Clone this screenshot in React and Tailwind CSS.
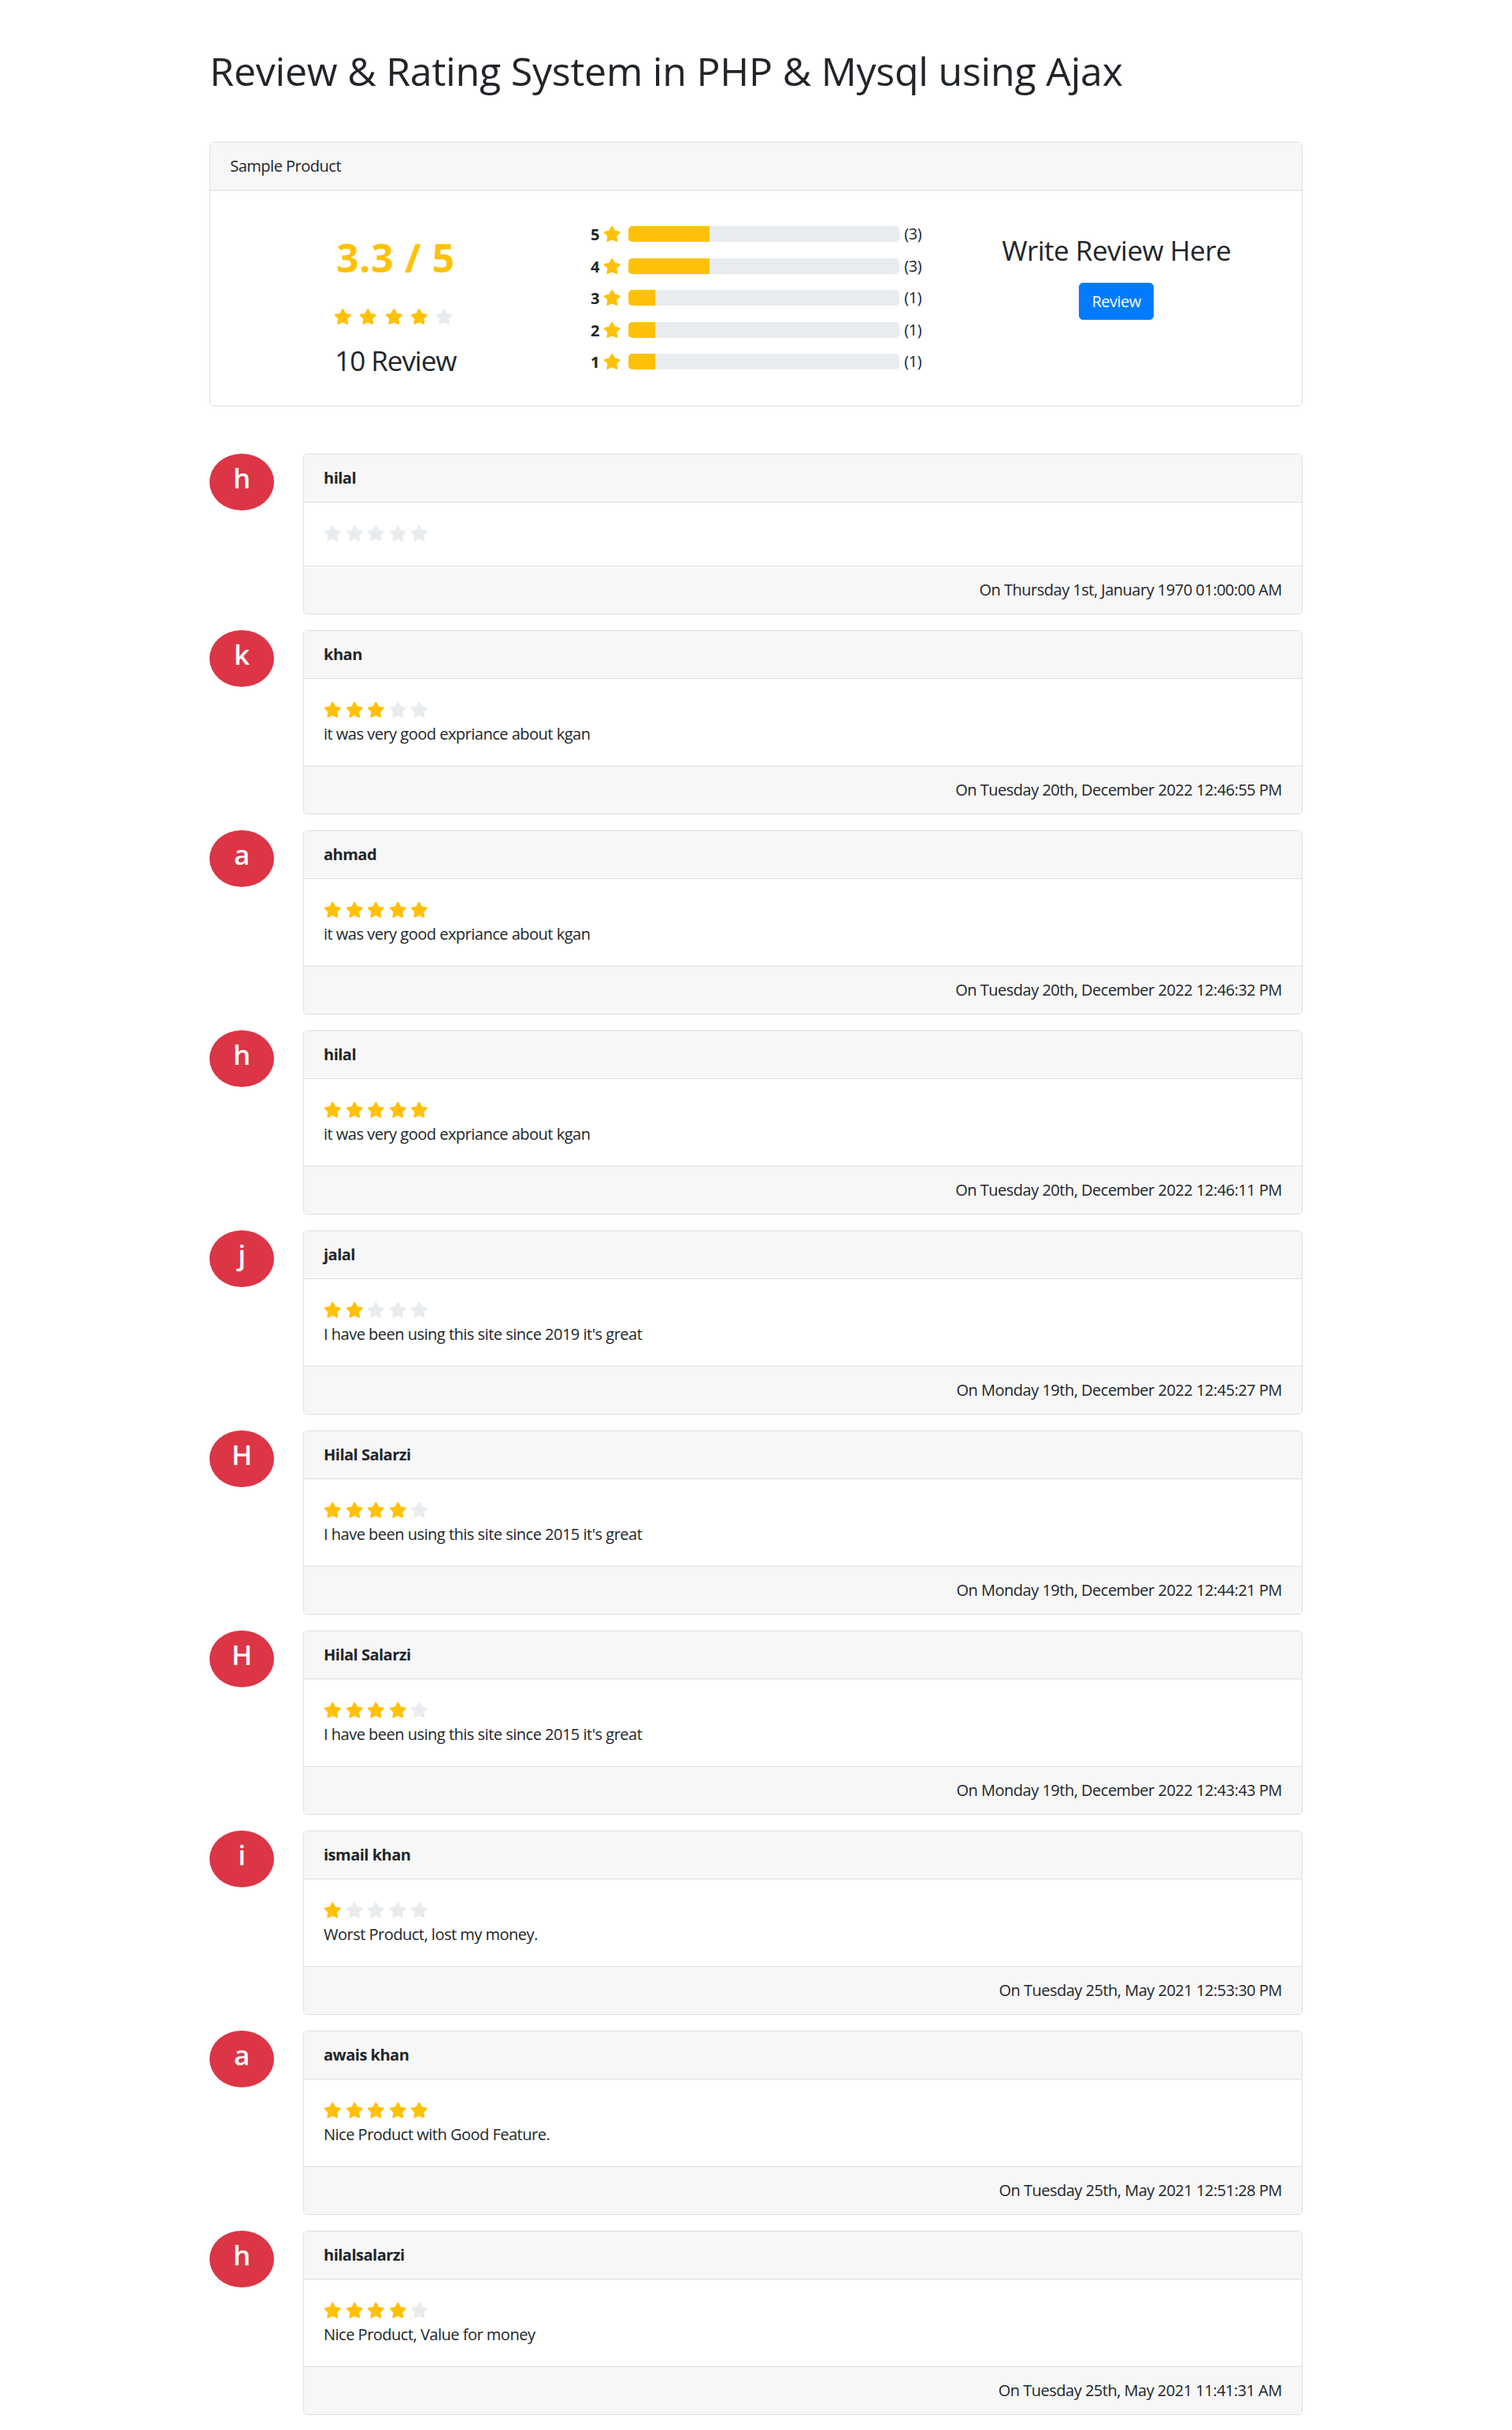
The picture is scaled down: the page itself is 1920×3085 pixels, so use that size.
import React from "react";

const STAR_PATH =
  "M259.3 17.8L194 150.2 47.9 171.5c-26.2 3.8-36.7 36.1-17.7 54.6l105.7 103-25 145.5c-4.5 26.3 23.2 46 46.4 33.7L288 439.6l130.7 68.7c23.2 12.2 50.9-7.4 46.4-33.7l-25-145.5 105.7-103c19-18.5 8.5-50.8-17.7-54.6L382 150.2 316.7 17.8c-11.7-23.6-45.6-23.9-57.4 0z";

function Star({ on, className = "" }) {
  return (
    <svg
      viewBox="0 0 576 512"
      className={`inline-block w-[22.5px] h-[20px] align-[-2.5px] ${
        on ? "fill-[#ffc107]" : "fill-[#e9ecef]"
      } ${className}`}
    >
      <path d={STAR_PATH} />
    </svg>
  );
}

const bars = [
  { n: 5, count: 3, pct: 30 },
  { n: 4, count: 3, pct: 30 },
  { n: 3, count: 1, pct: 10 },
  { n: 2, count: 1, pct: 10 },
  { n: 1, count: 1, pct: 10 },
];

const reviews = [
  { name: "hilal", rating: 0, text: "", date: "On Thursday 1st, January 1970 01:00:00 AM" },
  { name: "khan", rating: 3, text: "it was very good expriance about kgan", date: "On Tuesday 20th, December 2022 12:46:55 PM" },
  { name: "ahmad", rating: 5, text: "it was very good expriance about kgan", date: "On Tuesday 20th, December 2022 12:46:32 PM" },
  { name: "hilal", rating: 5, text: "it was very good expriance about kgan", date: "On Tuesday 20th, December 2022 12:46:11 PM" },
  { name: "jalal", rating: 2, text: "I have been using this site since 2019 it's great", date: "On Monday 19th, December 2022 12:45:27 PM" },
  { name: "Hilal Salarzi", rating: 4, text: "I have been using this site since 2015 it's great", date: "On Monday 19th, December 2022 12:44:21 PM" },
  { name: "Hilal Salarzi", rating: 4, text: "I have been using this site since 2015 it's great", date: "On Monday 19th, December 2022 12:43:43 PM" },
  { name: "ismail khan", rating: 1, text: "Worst Product, lost my money.", date: "On Tuesday 25th, May 2021 12:53:30 PM" },
  { name: "awais khan", rating: 5, text: "Nice Product with Good Feature.", date: "On Tuesday 25th, May 2021 12:51:28 PM" },
  { name: "hilalsalarzi", rating: 4, text: "Nice Product, Value for money", date: "On Tuesday 25th, May 2021 11:41:31 AM" },
];

function ReviewRow({ r }) {
  return (
    <div className="flex mb-[20px]">
      <div className="w-[81.25px] shrink-0">
        <div className="rounded-[50%] bg-[#dc3545] text-white pt-[10px] pb-[10px]">
          <h3 className="text-center text-[35px] leading-[42px] mb-[10px] font-semibold">
            {r.name.charAt(0)}
          </h3>
        </div>
      </div>
      <div className="ml-[37.5px] flex-1 min-w-0">
        <div className="border border-[#dfdfdf] rounded-[5px] overflow-hidden">
          <div className="bg-[#f7f7f7] border-b border-[#dfdfdf] px-[25px] py-[15px] leading-[30px] font-bold">
            {r.name}
          </div>
          <div className="p-[25px] leading-[30px]">
            <div>
              {[1, 2, 3, 4, 5].map((i) => (
                <Star key={i} on={i <= r.rating} className="mr-[5px]" />
              ))}
            </div>
            {r.text ? <div>{r.text}</div> : null}
          </div>
          <div className="bg-[#f7f7f7] border-t border-[#dfdfdf] px-[25px] py-[15px] leading-[30px] text-right">
            {r.date}
          </div>
        </div>
      </div>
    </div>
  );
}

export default function App() {
  return (
    <div className="bg-white min-h-[3085px] text-[#212529] text-[20px] leading-[30px] font-['Open_Sans',sans-serif] tracking-[-0.5px]">
      <div className="mx-auto w-[1387.5px] pt-[60px]">
        <h1 className="text-[50px] leading-[60px] font-normal mb-[60px] tracking-[-0.2px]">
          Review &amp; Rating System in PHP &amp; Mysql using Ajax
        </h1>

        <div className="border border-[#dfdfdf] rounded-[5px] overflow-hidden">
          <div className="bg-[#f7f7f7] border-b border-[#dfdfdf] px-[25px] py-[15px] leading-[30px]">
            Sample Product
          </div>
          <div className="p-[25px] grid grid-cols-3 gap-x-[37.5px]">
            <div className="text-center">
              <h1 className="mt-[30px] mb-[30px] text-[50px] leading-[60px] font-bold text-[#ffc107] tracking-[0.6px]">
                3.3 / 5
              </h1>
              <div className="mb-[20px] leading-[30px]">
                <Star on className="mr-[5px]" />{" "}
                <Star on className="mr-[5px]" />{" "}
                <Star on className="mr-[5px]" />{" "}
                <Star on className="mr-[5px]" />{" "}
                <Star on={false} className="mr-[5px]" />
              </div>
              <h3 className="text-[35px] leading-[42px] mb-[10px] font-normal tracking-[-1.05px]">10 Review</h3>
            </div>

            <div className="pt-[20px]">
              {bars.map((b) => (
                <div key={b.n} className="flex items-start mb-[20px] leading-[20px]">
                  <div className="mr-[10px] whitespace-nowrap">
                    <b>{b.n}</b> <Star on />
                  </div>
                  <div className="flex-1 h-[20px] rounded-[5px] bg-[#e9ecef] flex overflow-hidden">
                    <div className="h-full bg-[#ffc107]" style={{ width: `${b.pct}%` }} />
                  </div>
                  <div className="ml-[6px] whitespace-nowrap">({b.count})</div>
                </div>
              ))}
            </div>

            <div className="text-center">
              <h3 className="mt-[30px] mb-[20px] text-[35px] leading-[42px] font-normal">
                Write Review Here
              </h3>
              <button
                type="button"
                className="bg-[#007bff] text-white text-[20px] leading-[30px] px-[15px] py-[7.5px] rounded-[5px] border border-[#007bff]"
              >
                Review
              </button>
            </div>
          </div>
        </div>

        <div className="mt-[60px]">
          {reviews.map((r, i) => (
            <ReviewRow key={i} r={r} />
          ))}
        </div>
      </div>
    </div>
  );
}
